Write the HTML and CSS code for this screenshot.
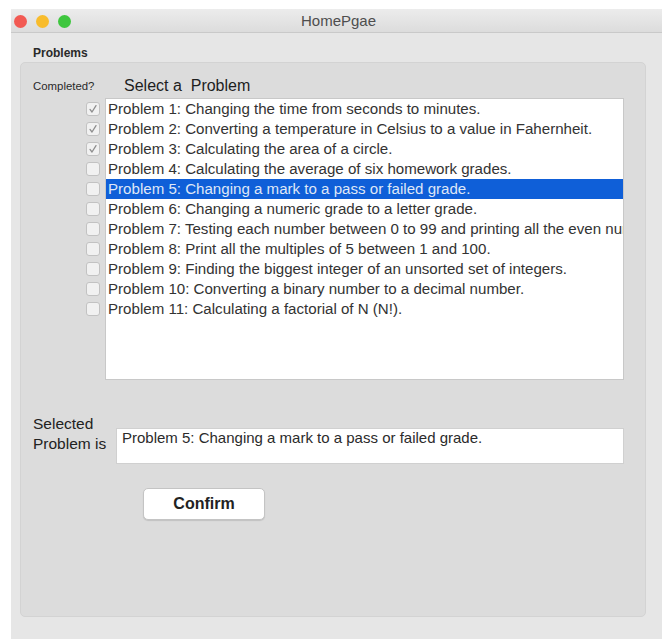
FILE: index.html
```html
<!DOCTYPE html>
<html lang="en">
<head>
<meta charset="utf-8">
<title>HomePgae</title>
<link rel="stylesheet" href="styles.css">
</head>
<body>
<div class="window">
  <div class="titlebar">
    <div class="lights">
      <span class="light red"></span>
      <span class="light yellow"></span>
      <span class="light green"></span>
    </div>
    <div class="title">HomePgae</div>
  </div>
  <div class="content">
    <div class="group-title">Problems</div>
    <div class="group">
      <div class="head">
        <span class="completed">Completed?</span>
        <span class="select">Select a&nbsp; Problem</span>
      </div>
      <div class="picker">
        <div class="checks">
          <span class="cell"><span class="box checked"><svg viewBox="0 0 12 12"><path d="M3 6.4 L5 9 L9 2.6"/></svg></span></span>
          <span class="cell"><span class="box checked"><svg viewBox="0 0 12 12"><path d="M3 6.4 L5 9 L9 2.6"/></svg></span></span>
          <span class="cell"><span class="box checked"><svg viewBox="0 0 12 12"><path d="M3 6.4 L5 9 L9 2.6"/></svg></span></span>
          <span class="cell"><span class="box"></span></span>
          <span class="cell"><span class="box"></span></span>
          <span class="cell"><span class="box"></span></span>
          <span class="cell"><span class="box"></span></span>
          <span class="cell"><span class="box"></span></span>
          <span class="cell"><span class="box"></span></span>
          <span class="cell"><span class="box"></span></span>
          <span class="cell"><span class="box"></span></span>
        </div>
        <ul class="list">
          <li>Problem 1: Changing the time from seconds to minutes.</li>
          <li>Problem 2: Converting a temperature in Celsius to a value in Fahernheit.</li>
          <li>Problem 3: Calculating the area of a circle.</li>
          <li>Problem 4: Calculating the average of six homework grades.</li>
          <li class="active">Problem 5: Changing a mark to a pass or failed grade.</li>
          <li>Problem 6: Changing a numeric grade to a letter grade.</li>
          <li>Problem 7: Testing each number between 0 to 99 and printing all the even numbers.</li>
          <li>Problem 8: Print all the multiples of 5 between 1 and 100.</li>
          <li>Problem 9: Finding the biggest integer of an unsorted set of integers.</li>
          <li>Problem 10: Converting a binary number to a decimal number.</li>
          <li>Problem 11: Calculating a factorial of N (N!).</li>
        </ul>
      </div>
      <div class="selected">
        <div class="sel-label">Selected<br>Problem is</div>
        <div class="field">Problem 5: Changing a mark to a pass or failed grade.</div>
      </div>
      <button class="confirm" type="button">Confirm</button>
    </div>
  </div>
</div>
</body>
</html>
```
FILE: styles.css
```css
html, body {
  margin: 0;
  padding: 0;
  background: #ffffff;
}

body {
  font-family: "Liberation Sans", Arial, sans-serif;
  color: #2b2b2b;
}

.window {
  margin: 9px 0 0 11px;
  height: 630px;
  background: #e6e6e6;
  overflow: hidden;
}

/* title bar with the three window buttons */
.titlebar {
  height: 23px;
  border-bottom: 1px solid #c9c9c9;
  background: linear-gradient(#ececec, #dcdcdc);
  position: relative;
  display: flex;
  align-items: center;
  justify-content: center;
}

.lights {
  position: absolute;
  left: 3px;
  top: 6px;
  display: flex;
  gap: 9px;
}

.light {
  width: 13px;
  height: 13px;
  border-radius: 50%;
  display: block;
}

.red { background: #f25a53; }
.yellow { background: #f8bc2c; }
.green { background: #3ec63e; }

.title {
  font-size: 15px;
  color: #4e4e4e;
  margin-left: 4px;
}

.content {
  padding: 13px 0 0 9px;
}

.group-title {
  font-size: 12px;
  font-weight: bold;
  line-height: 14px;
  color: #2a2a2a;
  margin: 0 0 2px 13px;
}

.group {
  box-sizing: border-box;
  width: 626px;
  height: 555px;
  background: #dcdcdc;
  border: 1px solid #d3d3d3;
  border-radius: 5px;
  padding: 12px 0 0 12px;
}

.head {
  display: flex;
  align-items: center;
  height: 22px;
}

.completed {
  width: 91px;
  font-size: 11.4px;
  color: #2a2a2a;
}

.select {
  font-size: 16px;
  color: #1e1e1e;
}

.picker {
  display: flex;
  gap: 5px;
  margin-top: 1px;
}

.checks {
  margin-left: 53px;
  width: 14px;
  padding-top: 1px;
  display: flex;
  flex-direction: column;
}

.cell {
  height: 20px;
  display: flex;
  align-items: center;
}

.box {
  box-sizing: border-box;
  width: 14px;
  height: 14px;
  border: 1px solid #c2c2c2;
  border-radius: 3px;
  background: #f1f1f1;
  display: block;
}

.box svg {
  display: block;
  width: 12px;
  height: 12px;
}

.box svg path {
  fill: none;
  stroke: #8e8e8e;
  stroke-width: 1.3;
  stroke-linecap: round;
  stroke-linejoin: round;
}

.list {
  box-sizing: border-box;
  width: 519px;
  height: 282px;
  margin: 0;
  padding: 0;
  list-style: none;
  background: #ffffff;
  border: 1px solid #c8c8c8;
  overflow: hidden;
}

.list li {
  height: 20px;
  line-height: 20px;
  font-size: 15.1px;
  padding-left: 2px;
  white-space: nowrap;
  overflow: hidden;
  color: #333333;
}

.list li.active {
  background: #0f5fd8;
  color: #dfe7f7;
}

.selected {
  display: flex;
  align-items: flex-start;
  margin-top: 34px;
}

.sel-label {
  width: 83px;
  font-size: 15.5px;
  line-height: 20px;
  color: #222222;
}

.field {
  box-sizing: border-box;
  width: 508px;
  height: 36px;
  margin-top: 14px;
  background: #ffffff;
  border: 1px solid #d0d0d0;
  padding: 0 5px;
  font-size: 15px;
  line-height: 18px;
  color: #2b2b2b;
}

.confirm {
  display: block;
  box-sizing: border-box;
  width: 122px;
  height: 32px;
  margin: 24px 0 0 110px;
  background: #ffffff;
  border: 1px solid #c4c4c4;
  border-radius: 5px;
  box-shadow: 0 1px 1px rgba(0, 0, 0, 0.12);
  font-family: "Liberation Sans", Arial, sans-serif;
  font-size: 16px;
  font-weight: bold;
  color: #222222;
  padding: 0;
}
```
